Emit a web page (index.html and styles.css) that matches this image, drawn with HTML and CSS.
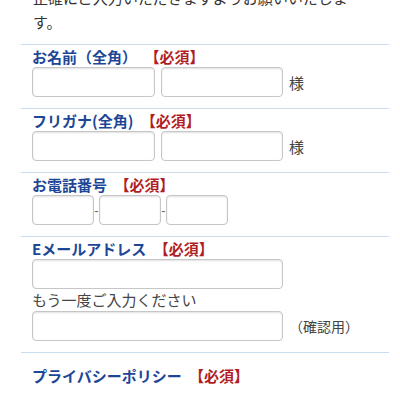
FILE: index.html
```html
<!DOCTYPE html>
<html lang="ja">

<head>
  <meta charset="UTF-8">
  <meta name="viewport" content="width=device-width, initial-scale=1.0">
  <title>お問い合わせフォーム</title>
  <link rel="stylesheet" href="styles.css">
</head>

<body>
  <div id="wrapper">
    <p class="intro">正確にご入力いただきますようお願いいたします。</p>

    <div class="row">
      <div class="label">お名前（全角） <span class="req">【必須】</span></div>
      <div class="fields">
        <input type="text" class="field half">
        <input type="text" class="field half2">
        <span class="suffix">様</span>
      </div>
    </div>

    <div class="row">
      <div class="label">フリガナ(全角) <span class="req">【必須】</span></div>
      <div class="fields">
        <input type="text" class="field half">
        <input type="text" class="field half2">
        <span class="suffix">様</span>
      </div>
    </div>

    <div class="row">
      <div class="label">お電話番号 <span class="req">【必須】</span></div>
      <div class="fields tel">
        <input type="tel" class="field short">
        <span class="dash">-</span>
        <input type="tel" class="field short">
        <span class="dash">-</span>
        <input type="tel" class="field short">
      </div>
    </div>

    <div class="row">
      <div class="label">Eメールアドレス <span class="req">【必須】</span></div>
      <div class="fields">
        <input type="email" class="field wide">
      </div>
      <p class="note">もう一度ご入力ください</p>
      <div class="fields">
        <input type="email" class="field wide">
        <span class="suffix small">（確認用）</span>
      </div>
    </div>

    <div class="row privacy">
      <div class="label">プライバシーポリシー <span class="req">【必須】</span></div>
    </div>
  </div>
</body>

</html>
```

FILE: styles.css
```css
html {
  font-family: "Noto Sans CJK JP", "Noto Sans", sans-serif;
}

body {
  margin: 0;
  background-color: #fff;
  color: #333;
}

#wrapper {
  width: 368px;
  margin: 0 auto 0 21px;
  font-size: 15px;
}

.intro {
  margin: -14px 0 10px;
  padding: 0 20px 0 12px;
  line-height: 24px;
}

.row {
  border-top: 1px solid #c9ddef;
  padding: 1px 11px 11px;
}

.label {
  color: #1d4796;
  font-weight: bold;
  line-height: 21px;
}

.req {
  margin-left: 4px;
  color: #b01e25;
}

.fields {
  display: flex;
  align-items: center;
  gap: 6px;
}

.field {
  box-sizing: border-box;
  height: 30px;
  margin: 0;
  border: 1px solid #c6c6c6;
  border-radius: 4px;
  box-shadow: inset 0 1px 2px rgba(0, 0, 0, 0.12);
  background-color: #fff;
}

.half {
  width: 123px;
}

.half2 {
  width: 122px;
}

.wide {
  width: 251px;
}

.tel {
  gap: 0;
}

.short {
  width: 62px;
}

.dash {
  width: 5px;
  font-family: "Liberation Sans", sans-serif;
  font-size: 13px;
  color: #666;
  text-align: center;
}

.suffix {
  color: #444;
}

.small {
  font-size: 14px;
}

.note {
  margin: 0;
  line-height: 22px;
  color: #444;
}

.privacy {
  padding-top: 12px;
  height: 40px;
}
```
